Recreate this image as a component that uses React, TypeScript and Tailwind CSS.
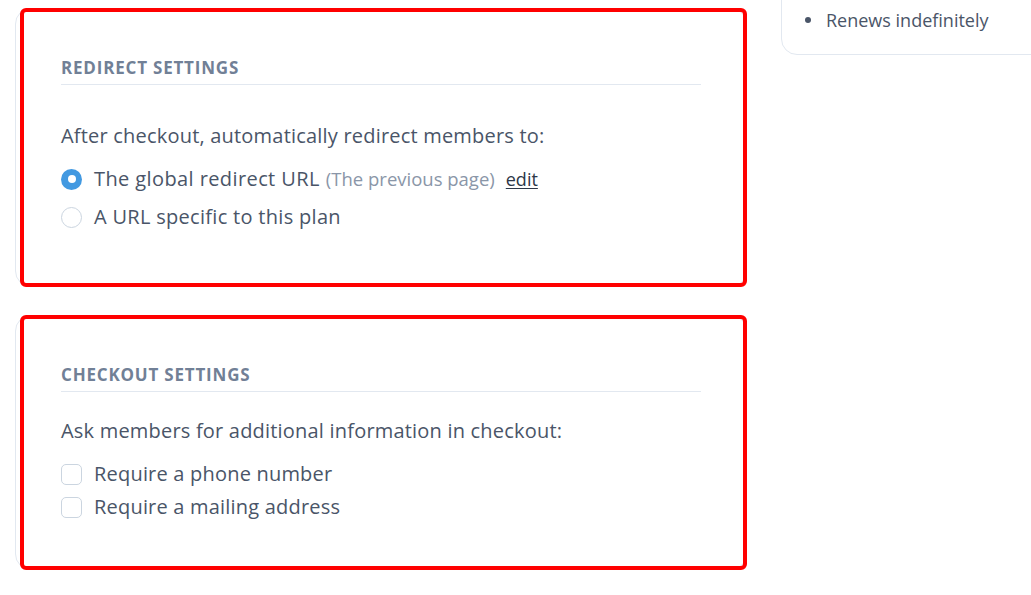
export default function App() {
  return (
    <div
      className="relative flex min-h-[595px] w-[1031px] overflow-hidden bg-white text-[#4a5568]"
      style={{ fontFamily: "'Open Sans', 'Noto Sans', sans-serif" }}
    >
      {/* Left column - settings cards */}
      <div className="flex w-[747px] shrink-0 flex-col gap-[28px] pl-[15px] pt-[8px]">
        <SettingsCard title="REDIRECT SETTINGS">
          <p className="mt-[37px] text-[20px] leading-[28px] tracking-[0.2px]">
            After checkout, automatically redirect members to:
          </p>
          <div className="mt-[15px] flex flex-col gap-[10px]">
            <label className="flex h-[28px] items-center gap-[12px]">
              <span className="flex h-[21px] w-[21px] items-center justify-center rounded-full bg-[#4299e1]">
                <span className="h-[8px] w-[8px] rounded-full bg-white" />
              </span>
              <span className="text-[20px] tracking-[0.4px]">The global redirect URL</span>
              <span className="-ml-[6px] text-[18.5px] text-[#8a96a8]">(The previous page)</span>
              <a className="-ml-[1px] text-[18px] text-[#2d3748] underline underline-offset-2">edit</a>
            </label>
            <label className="flex h-[28px] items-center gap-[12px]">
              <span className="h-[21px] w-[21px] rounded-full border border-[#cbd5e0] bg-white" />
              <span className="text-[20px] tracking-[0.3px]">A URL specific to this plan</span>
            </label>
          </div>
          <div className="h-[55px]" />
        </SettingsCard>

        <SettingsCard title="CHECKOUT SETTINGS">
          <p className="mt-[25px] text-[20px] leading-[28px] tracking-[0.2px]">
            Ask members for additional information in checkout:
          </p>
          <div className="mt-[15px] flex flex-col gap-[5px]">
            {["Require a phone number", "Require a mailing address"].map((label) => (
              <label key={label} className="flex h-[28px] items-center gap-[12px]">
                <span className="h-[21px] w-[21px] rounded-[5px] border border-[#cbd5e0] bg-white" />
                <span className="text-[20px] tracking-[0.2px]">{label}</span>
              </label>
            ))}
          </div>
          <div className="h-[48px]" />
        </SettingsCard>
      </div>

      {/* Right column - plan summary */}
      <div className="ml-[34px] w-[300px] shrink-0">
        <div className="-mt-[20px] rounded-2xl border border-[#e2e8f0] pb-[22px] pl-[23px] pt-[27px]">
          <div className="flex h-[24px] items-center gap-[15px]">
            <span className="h-[6px] w-[6px] rounded-full bg-[#4a5568]" />
            <span className="text-[18px]">Renews indefinitely</span>
          </div>
        </div>
      </div>
    </div>
  )
}

function SettingsCard({ title, children }: { title: string; children: React.ReactNode }) {
  return (
    <div className="relative rounded-2xl border border-[#e2e8f0] px-[45px] pt-[47px]">
      {/* highlight annotation */}
      <div className="pointer-events-none absolute -top-px -right-px -bottom-px left-[4px] rounded-md border-4 border-[#ff0000]" />
      <h2 className="border-b border-[#e2e8f0] pb-[4px] text-[17px] font-bold leading-[24px] tracking-[0.8px] text-[#718096]">
        {title}
      </h2>
      {children}
    </div>
  )
}
